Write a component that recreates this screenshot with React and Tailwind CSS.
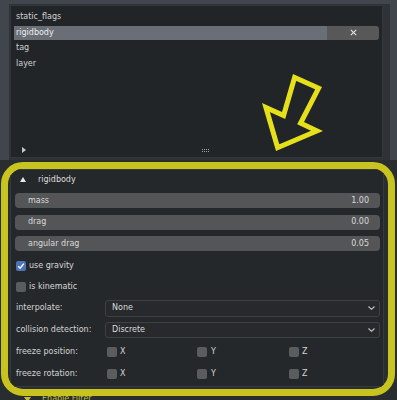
import React from "react";

const Chevron = () => (
  <svg width="7" height="4" viewBox="0 0 7 4" className="mr-[4px]">
    <polyline points="0.5,0.5 3.5,3.3 6.5,0.5" fill="none" stroke="#c8c8c8" strokeWidth="1.1" />
  </svg>
);

const Check = ({ on }) =>
  on ? (
    <div className="w-[10px] h-[10px] rounded-[2px] bg-[#4a74b6] flex items-center justify-center">
      <svg width="8" height="8" viewBox="0 0 8 8">
        <polyline points="1.2,4.2 3.2,6.2 6.8,1.6" fill="none" stroke="#ffffff" strokeWidth="1.4" />
      </svg>
    </div>
  ) : (
    <div className="w-[10px] h-[10px] rounded-[2px] bg-[#5b5c5e]" />
  );

const Field = ({ label, value, cls }) => (
  <div className={`ml-[4px] w-[365px] h-[15px] rounded-[4px] bg-[#545557] flex items-center justify-between pl-[13px] pr-[11px] text-[#dadada] ${cls}`}>
    <span>{label}</span>
    <span>{value}</span>
  </div>
);

const Select = ({ label, value, rowH, selH }) => (
  <div className={`flex items-center ${rowH}`}>
    <div className="ml-[5px] w-[89px] text-[#d4d4d4]">{label}</div>
    <div className={`w-[275px] ${selH} rounded-[3px] bg-[#27292c] border border-[#3d4044] flex items-center justify-between pl-[6px]`}>
      <span className="text-[#dcdcdc]">{value}</span>
      <Chevron />
    </div>
  </div>
);

const Freeze = ({ label, rowH }) => (
  <div className={`flex items-center ${rowH}`}>
    <div className="ml-[5px] w-[91px] text-[#d4d4d4]">{label}</div>
    <div className="w-[90px] flex items-center gap-[3px]">
      <Check />
      <span className="text-[#d4d4d4]">X</span>
    </div>
    <div className="w-[92px] flex items-center gap-[4px]">
      <Check />
      <span className="text-[#d4d4d4]">Y</span>
    </div>
    <div className="flex items-center gap-[3px]">
      <Check />
      <span className="text-[#d4d4d4]">Z</span>
    </div>
  </div>
);

export default function App() {
  const arrowPts = "38,6 67,19 49,54 68,63 21,83 7,35 27,44";
  return (
    <div className="w-[397px] h-[400px] overflow-hidden bg-[#2a2d30] relative font-['DejaVu_Sans',sans-serif] text-[8px] leading-none">
      {/* top list area */}
      <div className="h-[160px] bg-[#41464c] pt-[4px] pl-[9px]">
        <div className="w-[381px] h-[156px] bg-[#2f3337] pl-[1px] pt-[1px]">
          <div className="w-[373px] h-[153px] bg-[#222528] border border-[#33373b] pt-[4px] pl-[3px] flex flex-col">
            <div className="flex flex-col gap-[1.5px] w-[365px]">
              <div className="h-[14px] flex items-center pl-[2px] text-[#d2d2d2]">static_flags</div>
              <div className="h-[14px] flex">
                <div className="flex-1 bg-[#696e77] flex items-center pl-[2px] text-[#eeeeee]">rigidbody</div>
                <div className="w-[52px] bg-[#585858] rounded-r-[3px] flex items-center justify-center">
                  <svg width="7" height="7" viewBox="0 0 7 7">
                    <path d="M0.8 0.8 L6.2 6.2 M6.2 0.8 L0.8 6.2" stroke="#e4e4e4" strokeWidth="1.1" />
                  </svg>
                </div>
              </div>
              <div className="h-[14px] flex items-center pl-[2px] text-[#d2d2d2]">tag</div>
              <div className="h-[14px] flex items-center pl-[2px] text-[#d2d2d2]">layer</div>
            </div>
            <div className="mt-auto mb-[2px] h-[10px] flex items-center">
              <svg width="4" height="6" viewBox="0 0 4 6" className="ml-[8px]">
                <polygon points="0,0 4,3 0,6" fill="#c8c8c8" />
              </svg>
              <div className="ml-[176px] grid grid-cols-4 gap-[1px]">
                {Array.from({ length: 8 }).map((_, i) => (
                  <div key={i} className="w-[1px] h-[1px] bg-[#a0a0a0]" />
                ))}
              </div>
            </div>
          </div>
        </div>
      </div>

      {/* highlighted inspector */}
      <div className="mt-[2px] ml-[1px] w-[394px] h-[234px] border-[7px] border-[#c7c31f] rounded-[22px] overflow-hidden bg-[#2b2e31]">
        <div className="ml-[2px] w-[374px] h-[218px] bg-[#25282b] border border-[#36393d] flex flex-col">
          <div className="h-[19px] flex items-center">
            <svg width="6" height="5" viewBox="0 0 6 5" className="ml-[9px]">
              <polygon points="3,0 6,5 0,5" fill="#e8e8e8" />
            </svg>
            <span className="ml-[12px] text-[#dedede]">rigidbody</span>
          </div>
          <Field label="mass" value="1.00" cls="mt-[4px]" />
          <Field label="drag" value="0.00" cls="mt-[6.5px]" />
          <Field label="angular drag" value="0.05" cls="mt-[6.5px]" />
          <div className="mt-[4.5px] h-[21px] flex items-center gap-[3px] pl-[5px]">
            <Check on />
            <span className="text-[#d8d8d8]">use gravity</span>
          </div>
          <div className="h-[21px] flex items-center gap-[3px] pl-[5px]">
            <Check />
            <span className="text-[#d8d8d8]">is kinematic</span>
          </div>
          <Select label="interpolate:" value="None" rowH="h-[21.5px]" selH="h-[17px]" />
          <Select label="collision detection:" value="Discrete" rowH="h-[22px]" selH="h-[16px]" />
          <Freeze label="freeze position:" rowH="h-[22px]" />
          <Freeze label="freeze rotation:" rowH="h-[21.5px]" />
        </div>
      </div>

      {/* next section header, cut off */}
      <div className="h-[10px] flex items-start">
        <svg width="7" height="5" viewBox="0 0 7 5" className="ml-[24px] mt-[1px]">
          <polygon points="0,0 7,0 3.5,5" fill="#c4c034" />
        </svg>
        <span className="ml-[11px] -mt-[1px] text-[#c4c034] leading-[8px]">Enable Filter</span>
      </div>

      {/* annotation arrow */}
      <svg
        width="75"
        height="90"
        viewBox="0 0 75 90"
        className="absolute left-[255px] top-[68px]"
      >
        <defs>
          <clipPath id="arrowClip">
            <polygon points={arrowPts} />
          </clipPath>
        </defs>
        <polygon
          points={arrowPts}
          fill="none"
          stroke="#e6e01a"
          strokeWidth="10"
          strokeLinejoin="miter"
          clipPath="url(#arrowClip)"
        />
      </svg>
    </div>
  );
}
